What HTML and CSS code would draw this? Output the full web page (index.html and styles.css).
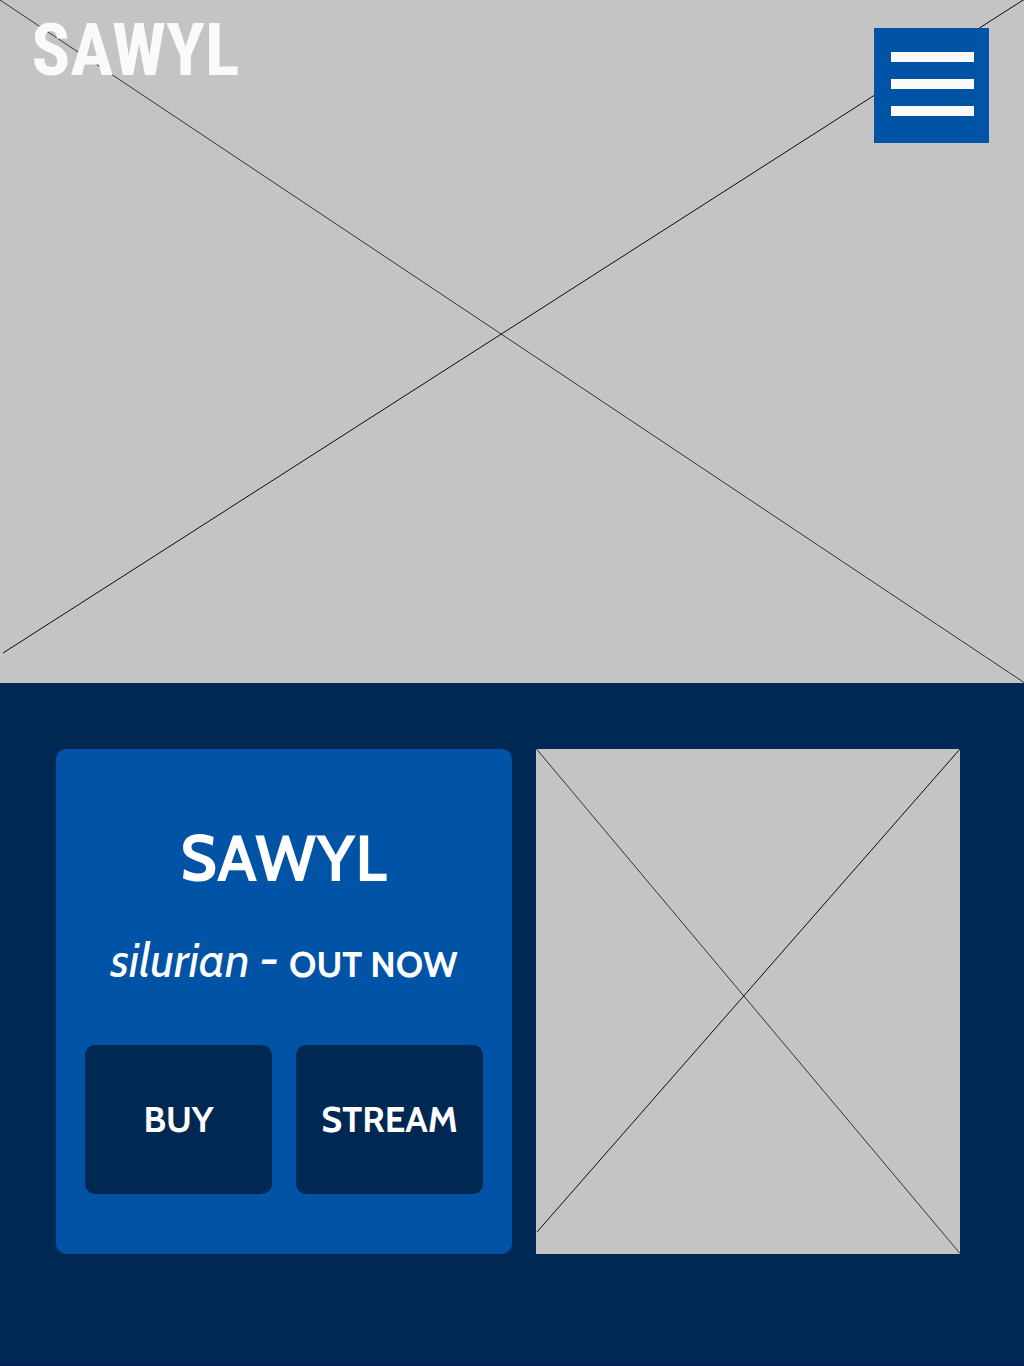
FILE: index.html
```html
<!DOCTYPE html>
<html lang="en">
<head>
<meta charset="utf-8">
<title>SAWYL</title>
<link rel="stylesheet" href="styles.css">
</head>
<body>
<header class="hero">
  <svg class="cross" viewBox="0 0 1024 683" aria-hidden="true">
    <path class="falling" d="M0 0 1024 682.5"/>
    <path class="rising" d="M3 653 1024 -.5"/>
  </svg>
  <div class="topbar">
    <h1 class="logo">SAWYL</h1>
    <button class="menu" aria-label="Menu"><span></span><span></span><span></span></button>
  </div>
</header>
<main class="release">
  <section class="card">
    <h2 class="artist">SAWYL</h2>
    <p class="headline"><em>silurian <b>-</b></em><strong>OUT NOW</strong></p>
    <div class="actions">
      <a class="button">BUY</a>
      <a class="button">STREAM</a>
    </div>
  </section>
  <div class="artwork">
    <svg class="cross" viewBox="0 0 424 505" aria-hidden="true">
      <path class="falling" d="M.5 0 424 504.5"/>
      <path class="rising" d="M1 483 424 0"/>
    </svg>
  </div>
</main>
</body>
</html>
```
FILE: styles.css
```css
* { box-sizing: border-box; }
body {
  margin: 0;
  min-height: 1366px;
  background: #002853;
  color: #fff;
  font-family: Cabin, Lato, sans-serif;
}
.hero {
  position: relative;
  height: 683px;
  background: #c4c4c4;
}
.cross {
  display: block;
  width: 100%;
  height: 100%;
  fill: none;
  stroke-width: 1;
}
.hero .cross { position: absolute; inset: 0; }
.falling { stroke: #333; }
.rising { stroke: #0c0c0c; }
.topbar {
  position: relative;
  display: flex;
  justify-content: space-between;
  align-items: flex-start;
  padding: 9px 35px 0 31.5px;
}
.logo {
  margin: 0;
  font: 700 72px/84px "Roboto Condensed", Roboto, sans-serif;
  font-stretch: 75%;
  color: #fafafa;
}
.menu {
  display: flex;
  flex-direction: column;
  gap: 17px;
  width: 115px;
  height: 115px;
  margin-top: 19px;
  padding: 24px 15px 0 17px;
  border: 0;
  background: #0153a5;
}
.menu span { height: 10px; background: #fafafa; }
.release {
  display: grid;
  grid-template-columns: 456px 424px;
  gap: 24px;
  height: 683px;
  padding: 66px 0 112px 56px;
  border-bottom: 1px solid #001f54;
}
.card {
  height: 505px;
  padding: 69px 29px 0;
  border-radius: 10px;
  background: #0153a5;
  text-align: center;
}
.artist {
  margin: 0;
  padding-right: 1px;
  font-size: 64px;
  line-height: 80px;
  font-weight: 700;
}
.headline {
  display: flex;
  justify-content: center;
  align-items: baseline;
  gap: 10px;
  margin: 32px 0 0;
  height: 60px;
  line-height: 60px;
}
.headline em { font-size: 48px; }
.headline b { font-weight: 700; }
.headline strong { font-size: 36px; font-weight: 700; }
.actions {
  display: grid;
  grid-template-columns: 1fr 1fr;
  gap: 24px;
  margin-top: 55px;
}
.button {
  display: flex;
  align-items: center;
  justify-content: center;
  height: 149px;
  padding-bottom: 2px;
  border-radius: 10px;
  background: #002853;
  font-size: 36px;
  font-weight: 700;
}
.artwork { height: 505px; background: #c4c4c4; }
```
